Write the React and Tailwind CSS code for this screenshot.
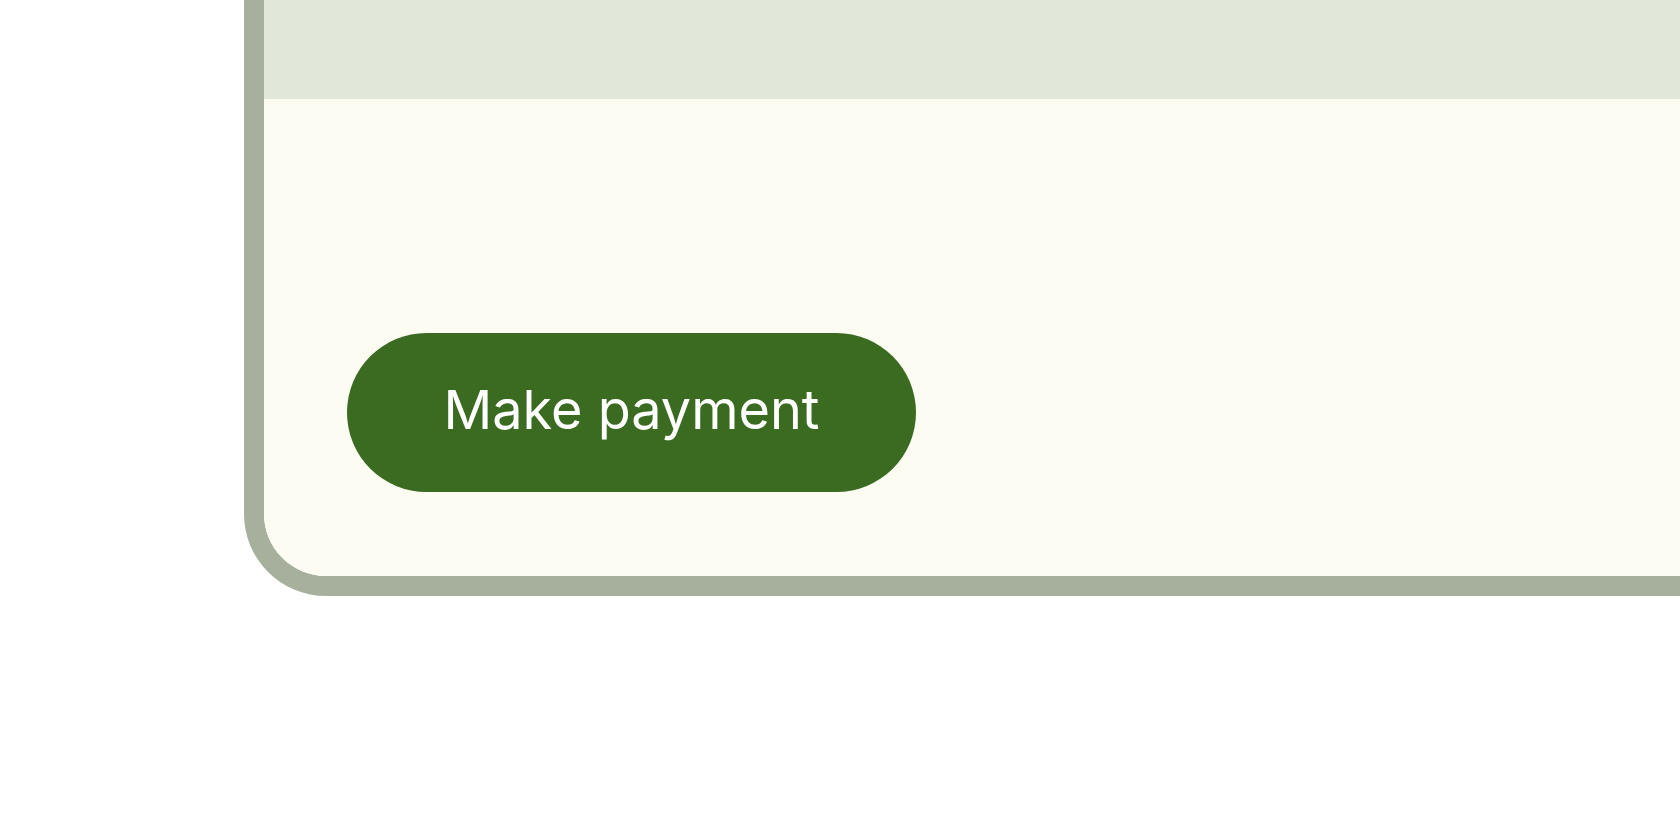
export default function App() {
  return (
    <div className="w-full h-[840px] overflow-hidden bg-white">
      <div className="ml-[244px] w-[1600px] border-l-[20px] border-r-[20px] border-b-[20px] border-[#a7b09c] rounded-bl-[82px] overflow-hidden">
        <div className="h-[99px] bg-[#e2e8d9]" />
        <div className="h-[477px] bg-[#fcfcf3] flex items-end pl-[83px] pb-[84px]">
          <button
            className="h-[159px] w-[569px] rounded-full bg-[#3a6b21] text-white text-[54px] leading-none pb-[5px] flex items-center justify-center"
            style={{ fontFamily: 'Inter, "Noto Sans", sans-serif' }}
          >
            Make payment
          </button>
        </div>
      </div>
    </div>
  )
}
